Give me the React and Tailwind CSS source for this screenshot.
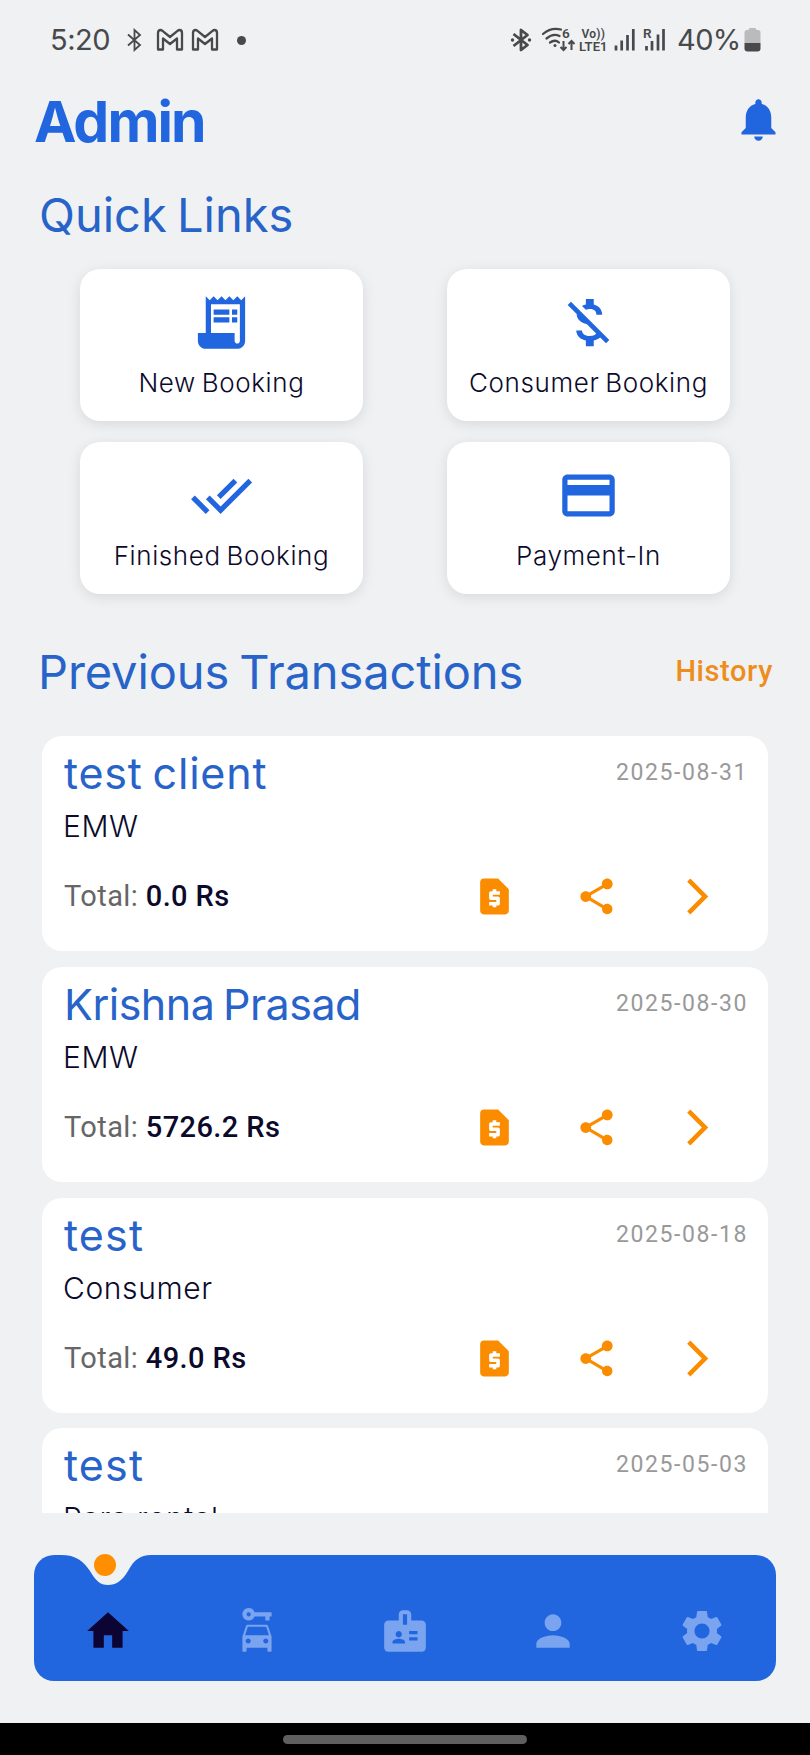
import {
  MdArrowForwardIos,
  MdBadge,
  MdCarRental,
  MdCreditCard,
  MdDoneAll,
  MdHome,
  MdMoneyOff,
  MdNotifications,
  MdPerson,
  MdReceiptLong,
  MdRequestPage,
  MdSettings,
  MdShare,
} from "react-icons/md";

const QUICK_LINKS = [
  { id: 1, label: "New Booking", icon: MdReceiptLong },
  { id: 2, label: "Consumer Booking", icon: MdMoneyOff },
  { id: 3, label: "Finished Booking", icon: MdDoneAll },
  { id: 4, label: "Payment-In", icon: MdCreditCard },
];

const TRANSACTIONS = [
  { id: 1, name: "test client", type: "EMW", total: "0.0", date: "2025-08-31", spacing: "tracking-[0.8px] [word-spacing:-3px]" },
  { id: 2, name: "Krishna Prasad", type: "EMW", total: "5726.2", date: "2025-08-30", spacing: "tracking-[-0.5px] [word-spacing:-3px]" },
  { id: 3, name: "test", type: "Consumer", total: "49.0", date: "2025-08-18", spacing: "tracking-[1.2px]" },
  { id: 4, name: "test", type: "Para rental", total: "0.0", date: "2025-05-03", spacing: "tracking-[1.2px]" },
];

const TABS = [
  { id: "home", icon: MdHome },
  { id: "rental", icon: MdCarRental },
  { id: "badge", icon: MdBadge },
  { id: "profile", icon: MdPerson },
  { id: "settings", icon: MdSettings },
];

const GmailIcon = () => (
  <svg width="28" height="24" viewBox="0 0 28 24" fill="none" stroke="currentColor" strokeWidth="2.300" strokeLinejoin="round">
    <path d="M2 21.500V5q0-3 2.500-3 1 0 2 .8L14 9l7.500-6.200q1-.8 2-.8 2.500 0 2.500 3v16.500h-5V10.500L14 16 7 10.500v11Z" />
  </svg>
);

const StatusBar = () => (
  <div className="flex h-20 shrink-0 items-center justify-between pl-[50px] pr-[49px] text-[#47494b]">
    <div className="flex items-center">
      <span className="w-[60px] text-[29px] tracking-[-0.5px]">5:20</span>
      <svg className="ml-[17px]" width="15" height="24" viewBox="0 0 15 24" fill="none" stroke="currentColor" strokeWidth="1.800">
        <path d="M1 6.500 13 17l-5.500 5V2L13 7 1 17.500" />
      </svg>
      <span className="ml-[14px] flex gap-[7px]">
        <GmailIcon />
        <GmailIcon />
      </span>
      <span className="ml-[18px] h-[9px] w-[9px] rounded-full bg-[#47494b]" />
    </div>
    <div className="flex items-center">
      <svg className="overflow-visible" width="164" height="28" viewBox="508 26 164 28" fill="none" stroke="currentColor" strokeWidth="2.300">
        <path d="m512.500 34 14 11-6.500 5V30l6.500 5-14 11" strokeWidth="2.800" strokeLinejoin="round" />
        <circle cx="511.500" cy="40" r="1.700" fill="currentColor" stroke="none" />
        <circle cx="528.500" cy="40" r="1.700" fill="currentColor" stroke="none" />
        <path d="M542 34q8-7 18-4.500M545.500 38.500q6.500-5.500 13-2.500M549 42.500q5-3.500 9 0" strokeLinecap="round" />
        <circle cx="554" cy="45.500" r="1.500" fill="currentColor" stroke="none" />
        <path d="M562.500 41v9m-3-3 3 3 3-3M570.500 50v-9m-3 3 3-3 3 3" strokeWidth="2" />
        <g fill="currentColor" stroke="none" fontFamily="Roboto, sans-serif" fontWeight="600">
          <text x="561" y="38" fontSize="13.500">6</text>
          <text x="580.500" y="38" fontSize="12" textLength="23.500">Vo))</text>
          <text x="578" y="51" fontSize="13" textLength="28.500">LTE1</text>
          <text x="642" y="38" fontSize="13.500">R</text>
        </g>
        <path d="M615 45.500V50.500M620.700 40.500V50.500M626.500 35V50.500M632.300 29V50.500M645.500 46V50.500M651 41V50.500M657 34.500V50.500M662.500 29V50.500" strokeWidth="2.700" />
      </svg>
      <span className="ml-[4px] w-[64px] whitespace-nowrap text-[29px] tracking-[-0.6px]">40%</span>
      <svg className="ml-[3px]" width="17" height="24" viewBox="0 0 17 24">
        <path d="M4.500 2q0-2 2-2h4q2 0 2 2H14q2.500 0 2.500 2.500V15H.5V4.500Q.5 2 3 2Z" fill="#b9bbbc" />
        <path d="M.5 15h16v5.500q0 3-3 3h-10q-3 0-3-3Z" fill="#47494b" />
      </svg>
    </div>
  </div>
);

const QuickLink = ({ link }) => {
  const Icon = link.icon;

  return (
    <button className="flex h-[152px] flex-col items-center rounded-[20px] bg-white pt-[22px] shadow-[0_3px_14px_rgba(0,0,0,0.1)]">
      <Icon className="h-[63px] w-[63px] shrink-0 text-[#2166df]" />
      <span className="mt-[12px] whitespace-nowrap text-[26px] leading-[34px] font-light tracking-[0.6px] text-[#0c0a2b] [word-spacing:-2px]">
        {link.label}
      </span>
    </button>
  );
};

const TransactionCard = ({ transaction }) => (
  <div className="flex h-[215.300px] shrink-0 flex-col rounded-[20px] bg-white pl-[22px] pr-[22px]">
    <div className="flex justify-between pt-[12px]">
      <h3 className={`text-[43px] leading-[50px] text-[#2763c8] ${transaction.spacing}`}>
        {transaction.name}
      </h3>
      <span className="-mr-[2px] pt-[10px] font-[Roboto] text-[23px] leading-[30px] tracking-[1.600px] text-[#999]">
        {transaction.date}
      </span>
    </div>
    <p className="mt-[10px] -ml-px text-[30px] leading-[36px] font-light tracking-[0.6px] text-[#0c0a2b]">
      {transaction.type}
    </p>
    <div className="mt-[31px] flex items-center justify-between pr-[27px]">
      <p className="whitespace-pre font-[Roboto] text-[29px] leading-[43px] font-medium tracking-[0.400px] text-[#0c0a2b]">
        <span className="font-normal text-[#666]">Total: </span>
        {transaction.total} Rs
      </p>
      <div className="flex gap-[58.500px] text-[#fb8c00]">
        <MdRequestPage size={43} />
        <MdShare size={43} />
        <MdArrowForwardIos size={43} />
      </div>
    </div>
  </div>
);

const BottomNav = () => (
  <nav className="relative mx-[34px] mt-[42px] flex h-[126px] shrink-0 items-end rounded-[20px] bg-[#2166df] pb-[25px]">
    <svg className="absolute left-[27px] -top-px" width="92" height="32" viewBox="0 0 92 32">
      <path d="M0 0V1C15 1 22 7 29 17C35 27 39 31 47 31C55 31 61 27 67 17C73 6 79 1 90 1V0Z" fill="#eff1f3" />
    </svg>
    <span className="absolute left-[60px] -top-px h-[22px] w-[22px] rounded-full bg-[#ff8f00]" />
    {TABS.map((tab) => {
      const Icon = tab.icon;
      return (
        <button key={tab.id} className="flex flex-1 justify-center">
          <Icon size={50} className={tab.id === "home" ? "text-[#0c0533]" : "text-[#7aa3f0]"} />
        </button>
      );
    })}
  </nav>
);

const App = () => {
  return (
    <div className="flex h-[1755px] w-[810px] flex-col overflow-hidden bg-[#eff1f3] font-[Inter,sans-serif]">
      <StatusBar />
      <header className="flex h-[80px] shrink-0 items-center justify-between pl-[34px] pr-[26px]">
        <h1 className="mt-[3px] text-[57px] leading-[64px] font-bold tracking-[-1.900px] text-[#2166df]">Admin</h1>
        <MdNotifications size={51} className="-mt-px text-[#2166df]" />
      </header>
      <h2 className="mt-[27px] shrink-0 pl-[39px] text-[47px] leading-[56px] text-[#2763c8] [word-spacing:-3px]">
        Quick Links
      </h2>
      <section className="mt-[26px] grid shrink-0 grid-cols-2 gap-x-[84px] gap-y-[21px] px-[80px]">
        {QUICK_LINKS.map((link) => (
          <QuickLink key={link.id} link={link} />
        ))}
      </section>
      <div className="mt-[50px] flex h-[56px] shrink-0 items-center justify-between pl-[38px] pr-[37px]">
        <h2 className="text-[47px] leading-[56px] tracking-[-0.1px] text-[#2763c8] [word-spacing:-3px]">
          Previous Transactions
        </h2>
        <a className="font-[Roboto] text-[29px] font-medium tracking-[0.600px] text-[#ee8d1b]">History</a>
      </div>
      <section className="mt-[36px] flex h-[777px] shrink-0 flex-col gap-[15.500px] overflow-hidden pl-[42px] pr-[42px]">
        {TRANSACTIONS.map((transaction) => (
          <TransactionCard key={transaction.id} transaction={transaction} />
        ))}
      </section>
      <BottomNav />
      <div className="mt-auto flex h-[32px] shrink-0 items-center justify-center bg-black">
        <div className="h-[9px] w-[244px] rounded-full bg-[#5f5f5f]" />
      </div>
    </div>
  );
};

export default App;
